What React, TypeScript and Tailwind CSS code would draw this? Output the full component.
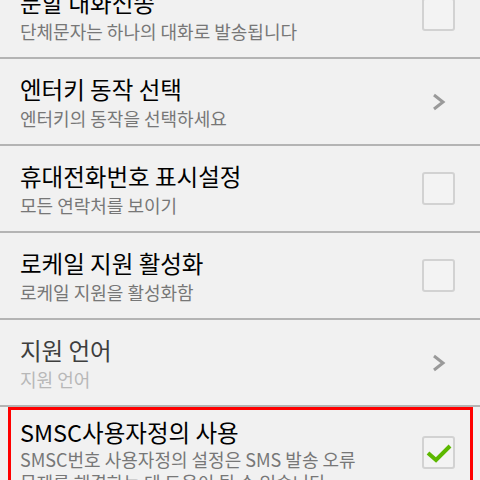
import React from "react";

type Row = {
    title: string;
    subtitle: string;
    kind: "check" | "chevron";
    checked?: boolean;
    disabled?: boolean;
    highlight?: boolean;
};

const rows: Row[] = [
    { title: "분할 대화전송", subtitle: "단체문자는 하나의 대화로 발송됩니다", kind: "check" },
    { title: "엔터키 동작 선택", subtitle: "엔터키의 동작을 선택하세요", kind: "chevron" },
    { title: "휴대전화번호 표시설정", subtitle: "모든 연락처를 보이기", kind: "check" },
    { title: "로케일 지원 활성화", subtitle: "로케일 지원을 활성화함", kind: "check" },
    { title: "지원 언어", subtitle: "지원 언어", kind: "chevron", disabled: true },
    {
        title: "SMSC사용자정의 사용",
        subtitle: "SMSC번호 사용자정의 설정은 SMS 발송 오류 문제를 해결하는 데 도움이 될 수 있습니다",
        kind: "check",
        checked: true,
        highlight: true,
    },
];

function CheckBox({ checked }: { checked?: boolean }) {
    return (
        <div className="w-[33px] h-[33px] rounded-[3px] border-2 border-[#d2d2d2] bg-[#f3f3f3] flex items-center justify-center">
            {checked && (
                <svg width="28" height="24" viewBox="0 0 28 24">
                    <path d="M3 12 L11 19 L25 5" fill="none" stroke="#5cb800" strokeWidth="4" strokeLinejoin="miter" />
                </svg>
            )}
        </div>
    );
}

function Chevron() {
    return (
        <div className="w-[33px] h-[33px] flex items-center justify-center">
            <svg width="16" height="18" viewBox="0 0 16 18">
                <path d="M3 2 L12 9 L3 16" fill="none" stroke="#9a9a9a" strokeWidth="3" />
            </svg>
        </div>
    );
}

export default function App() {
    return (
        <div
            className="w-[480px] h-[480px] overflow-hidden bg-[#f1f1f1]"
            style={{ fontFamily: '"Noto Sans CJK KR", "Noto Sans", sans-serif' }}
        >
            <div className="-mt-[28px]">
                {rows.map((row, i) => (
                    <div
                        key={i}
                        className={
                            "relative flex pl-[20px] pr-[25px] border-b-2 border-[#b4b4b4] " +
                            (row.highlight ? "items-start pt-[10px] pb-[14px]" : "h-[87px] items-center")
                        }
                    >
                        <div className="flex-1 min-w-0">
                            <div
                                className={
                                    "text-[23.5px] leading-[31px] " +
                                    (row.disabled ? "text-[#3e3e3e]" : "text-black")
                                }
                            >
                                {row.title}
                            </div>
                            <div
                                className={
                                    "text-[18px] leading-[23px] max-w-[350px] break-keep " +
                                    (row.highlight ? "" : "mt-[2px] ") +
                                    (row.disabled ? "text-[#b8b8b8]" : "text-[#777777]")
                                }
                            >
                                {row.subtitle}
                            </div>
                        </div>
                        <div className={row.highlight ? "mt-[19px]" : ""}>
                            {row.kind === "check" ? <CheckBox checked={row.checked} /> : <Chevron />}
                        </div>
                        {row.highlight && (
                            <div className="absolute left-[8px] right-[7px] top-0 bottom-0 border-[3px] border-[#ff0000] pointer-events-none" />
                        )}
                    </div>
                ))}
            </div>
        </div>
    );
}
